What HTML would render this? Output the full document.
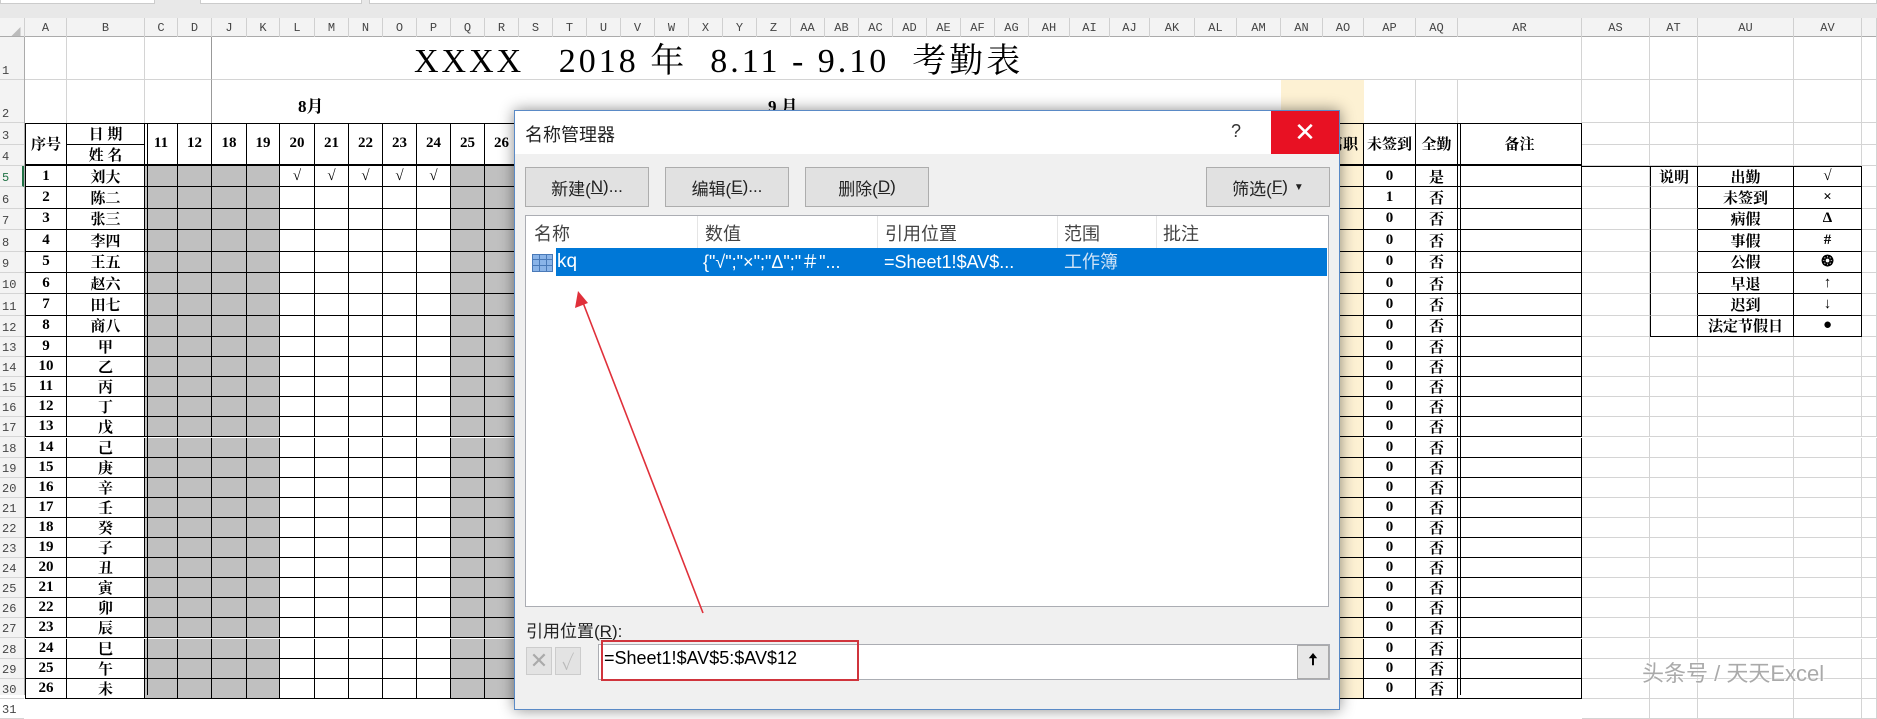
<!DOCTYPE html>
<html><head><meta charset="utf-8">
<style>
*{margin:0;padding:0;box-sizing:border-box}
body{width:1877px;height:695px;overflow:hidden;background:#fff;position:relative;font-family:"Liberation Serif","Noto Serif CJK SC",serif}
.c{position:absolute;display:flex;align-items:center;justify-content:center;white-space:nowrap;overflow:hidden}
.h{color:#444;font-size:12px;font-family:"Liberation Mono","Noto Sans CJK SC",monospace}
.d{font-weight:bold;font-size:15px;color:#000}
.dl{position:absolute;font-family:"Liberation Sans","Noto Sans CJK SC",sans-serif;color:#222;white-space:nowrap}
.btn{position:absolute;top:167px;height:40px;width:124px;background:#e1e1e1;border:1px solid #adadad;display:flex;align-items:center;justify-content:center;font-size:17px;font-family:"Liberation Sans","Noto Sans CJK SC",sans-serif;color:#222}
</style></head><body>
<div id="g"></div>
<script>
var cols=[['',0,25],['A',25,67],['B',67,145],['C',145,178],['D',178,212],['J',212,247],['K',247,280],['L',280,315],['M',315,349],['N',349,383],['O',383,417],['P',417,451],['Q',451,485],['R',485,519]];
var names=['S','T','U','V','W','X','Y','Z','AA','AB','AC','AD','AE','AF','AG'];var x=519;
names.forEach(function(n){cols.push([n,x,x+34]);x+=34;});
[['AH',1070],['AI',1110],['AJ',1150],['AK',1195],['AL',1237],['AM',1281],['AN',1323],['AO',1364],['AP',1416],['AQ',1458],['AR',1582],['AS',1650],['AT',1698],['AU',1794],['AV',1862],['',1877]].forEach(function(a){cols.push([a[0],x,a[1]]);x=a[1];});
var rows=[[18,37],[37,80],[80,123],[123,145],[145,166]];
for(var r=5;r<=12;r++)rows[r]=[166+(r-5)*21.375,166+(r-4)*21.375];
for(r=13;r<=31;r++)rows[r]=[337+(r-13)*20.1,337+(r-12)*20.1];
var h='';
function ci(n){for(var i=0;i<cols.length;i++)if(cols[i][0]==n)return i;}
function box(x1,y1,x2,y2,st,txt,cls){h+='<div class="c '+(cls||'')+'" style="left:'+x1+'px;top:'+y1+'px;width:'+(x2-x1)+'px;height:'+(y2-y1)+'px;'+st+'">'+(txt===undefined?'':txt)+'</div>';}
box(0,0,1877,18,'background:#e8e8e8');
box(0,0,155,4,'background:#fff;border:1px solid #ccc;border-top:0');
box(200,0,362,4,'background:#fff;border:1px solid #ccc;border-top:0');
box(369,0,1877,4,'background:#fff;border:1px solid #ccc;border-top:0');
box(0,18,1877,37,'background:#f3f3f3;border-bottom:1px solid #ababab');
for(var i=1;i<cols.length;i++)box(cols[i][1],18,cols[i][2],37,'border-right:1px solid #d0d0d0',cols[i][0],'h');
box(0,18,25,37,'border-right:1px solid #d0d0d0','<span style="color:#bbb;font-size:9px;margin:8px 0 0 8px">◢</span>');
box(0,37,25,695,'background:#f3f3f3;border-right:1px solid #ababab');
for(r=1;r<=31;r++)box(0,rows[r][0],24,rows[r][1],'justify-content:flex-start;align-items:flex-end;padding:0 0 1px 2px;border-bottom:1px solid #d4d4d4;'+(r==5?'color:#217346;border-right:2px solid #217346':''),r,'h');
var L='1px solid #d4d4d4';
box(25,37,67,80,'border-right:'+L+';border-bottom:'+L);box(67,37,145,80,'border-right:'+L+';border-bottom:'+L);box(145,37,212,80,'border-right:1px solid #999;border-bottom:'+L);
box(25,80,67,123,'border-right:'+L);box(67,80,145,123,'border-right:'+L);box(145,80,212,123,'border-right:1px solid #999');
box(212,37,1582,80,'border-bottom:'+L);
box(1281,80,1364,695,'background:#fdf1d3');
box(1364,80,1416,123,'border-right:'+L);box(1416,80,1458,123,'border-right:'+L);
for(i=ci('AS');i<cols.length;i++){for(r=1;r<=31;r++){if(i<ci('AT')||r<5||r>12||i==cols.length-1)box(cols[i][1],rows[r][0],cols[i][2],rows[r][1],'border-right:'+L+';border-bottom:'+L);}}
box(1458,37,1582,123,'border-right:'+L);box(1364,37,1582,80,'border-bottom:'+L);
var K='1px solid #000';
var days={C:11,D:12,J:18,K:19,L:20,M:21,N:22,O:23,P:24,Q:25,R:26,S:27,T:28,U:29,V:30,W:31,X:1,Y:2,Z:3,AA:4,AB:5,AC:6,AD:7,AE:8,AF:9,AG:10};
var gray={C:1,D:1,J:1,K:1,Q:1,R:1};
var nm=['刘大','陈二','张三','李四','王五','赵六','田七','商八','甲','乙','丙','丁','戊','己','庚','辛','壬','癸','子','丑','寅','卯','辰','巳','午','未'];
box(25,123,1582,124,'background:#000');
for(i=1;i<=ci('AR');i++){var n=cols[i][0],x1=cols[i][1],x2=cols[i][2];
 if(n=='B'){box(x1,123,x2,145,'border-right:'+K+';border-bottom:'+K,'日 期','d');box(x1,145,x2,166,'border-right:'+K+';border-bottom:2px solid #000','姓 名','d');}
 else{var t=n=='A'?'序号':n=='AP'?'未签到':n=='AQ'?'全勤':n=='AR'?'备注':n=='AO'?'离职':(days[n]||'');
 box(x1,123,x2,166,'border-right:'+K+';border-bottom:2px solid #000;'+(i==1?'border-left:'+K:''),t,'d');}
 for(r=5;r<=30;r++){var tx='',bg='';
  if(n=='A')tx=r-4;if(n=='B')tx=nm[r-5];
  if(r==5&&'LMNOP'.indexOf(n)>=0&&n.length==1)tx='√';
  if(n=='AP')tx=String(r==6?1:0);if(n=='AQ')tx=r==5?'是':'否';
  if(gray[n])bg='background:#c0c0c0;';if(n=='AN'||n=='AO')bg='background:#fdf1d3;';
  box(x1,rows[r][0],x2,rows[r][1],bg+'border-right:'+K+';border-bottom:'+K+(i==1?';border-left:'+K:''),tx,'d');}
}
box(147,123,148,695,'background:#000');box(1460,123,1461,695,'background:#000');
var lg=[['出勤','√'],['未签到','×'],['病假','Δ'],['事假','#'],['公假','❂'],['早退','↑'],['迟到','↓'],['法定节假日','●']];
box(1582,166,1862,167,'background:#000');
for(r=5;r<=12;r++){var y1=rows[r][0],y2=rows[r][1];
 box(1650,y1,1698,y2,'border-left:'+K+';border-right:'+K+';border-bottom:'+(r==12?K:'1px solid #ccc'),r==5?'说明':'','d');
 box(1698,y1,1794,y2,'border-right:'+K+';border-bottom:'+K,lg[r-5][0],'d');
 box(1794,y1,1862,y2,'border-right:'+K+';border-bottom:'+K,lg[r-5][1],'d');}
document.getElementById('g').innerHTML=h;
</script>
<div style="position:absolute;left:414px;top:42px;font-size:34px;letter-spacing:3px;white-space:nowrap;line-height:40px">XXXX&nbsp;&nbsp; 2018 年&nbsp; 8.11 - 9.10&nbsp; 考勤表</div>
<div style="position:absolute;left:298px;top:92px;font-size:17px;font-weight:bold">8月</div>
<div style="position:absolute;left:768px;top:92px;font-size:17px;font-weight:bold">9 月</div>
<div style="position:absolute;left:514px;top:110px;width:826px;height:600px;background:#f0f0f0;border:1px solid #5a8ac6;box-shadow:0 0 14px rgba(0,0,0,.45)">
 <div style="position:absolute;left:0;top:0;width:824px;height:43px;background:#fff"></div>
 <div class="dl" style="left:10px;top:10px;font-size:18px">名称管理器</div>
 <div class="dl" style="left:716px;top:10px;font-size:18px;color:#333">?</div>
 <div style="position:absolute;left:756px;top:0;width:68px;height:43px;background:#e81123;color:#fff;font-size:26px;display:flex;align-items:center;justify-content:center;font-family:'Liberation Sans',sans-serif;font-weight:200">✕</div>
</div>
<div class="btn" style="left:525px">新建(<u>N</u>)...</div>
<div class="btn" style="left:665px">编辑(<u>E</u>)...</div>
<div class="btn" style="left:805px">删除(<u>D</u>)</div>
<div class="btn" style="left:1206px">筛选(<u>F</u>) <span style="font-size:10px;margin-left:6px">▼</span></div>
<div style="position:absolute;left:525px;top:215px;width:804px;height:392px;background:#fff;border:1px solid #abadb3"></div>
<div class="dl" style="left:534px;top:220px;font-size:18px;color:#444">名称</div>
<div style="position:absolute;left:697px;top:216px;width:1px;height:32px;background:#e5e5e5"></div>
<div class="dl" style="left:705px;top:220px;font-size:18px;color:#444">数值</div>
<div style="position:absolute;left:877px;top:216px;width:1px;height:32px;background:#e5e5e5"></div>
<div class="dl" style="left:885px;top:220px;font-size:18px;color:#444">引用位置</div>
<div style="position:absolute;left:1057px;top:216px;width:1px;height:32px;background:#e5e5e5"></div>
<div class="dl" style="left:1064px;top:220px;font-size:18px;color:#444">范围</div>
<div style="position:absolute;left:1156px;top:216px;width:1px;height:32px;background:#e5e5e5"></div>
<div class="dl" style="left:1163px;top:220px;font-size:18px;color:#444">批注</div>
<div style="position:absolute;left:532px;top:254px;width:21px;height:18px;background:#8ab4e8;border:1px solid #4a7ab8;background-image:linear-gradient(90deg,transparent 6px,#4a7ab8 6px,#4a7ab8 7px,transparent 7px,transparent 13px,#4a7ab8 13px,#4a7ab8 14px,transparent 14px),linear-gradient(0deg,transparent 5px,#4a7ab8 5px,#4a7ab8 6px,transparent 6px,transparent 11px,#4a7ab8 11px,#4a7ab8 12px,transparent 12px)"></div>
<div style="position:absolute;left:556px;top:248px;width:771px;height:28px;background:#0078d7"></div>
<div class="dl" style="left:557px;top:250px;font-size:19px;line-height:24px;color:#fff">kq</div>
<div class="dl" style="left:703px;top:250px;font-size:18px;line-height:24px;color:#fff">{"√";"×";"Δ";"＃"...</div>
<div class="dl" style="left:884px;top:250px;font-size:18px;line-height:24px;color:#fff">=Sheet1!$AV$...</div>
<div class="dl" style="left:1064px;top:250px;font-size:18px;line-height:24px;color:#cfe3f7">工作簿</div>
<div class="dl" style="left:526px;top:617px;font-size:17px">引用位置(<u>R</u>):</div>
<div style="position:absolute;left:526px;top:647px;width:26px;height:28px;background:#e3e3e3;border:1px solid #ccc;color:#aaa;font-size:22px;display:flex;align-items:center;justify-content:center">✕</div>
<div style="position:absolute;left:555px;top:647px;width:26px;height:28px;background:#e3e3e3;border:1px solid #ccc;color:#bbb;font-size:20px;display:flex;align-items:center;justify-content:center">✓</div>
<div style="position:absolute;left:598px;top:644px;width:732px;height:36px;background:#fff;border:1px solid #abadb3"></div>
<div style="position:absolute;left:1297px;top:645px;width:32px;height:34px;background:#e8e8e8;border:1px solid #aaa;display:flex;align-items:center;justify-content:center;font-size:16px;font-weight:bold">🠅</div>
<div style="position:absolute;left:601px;top:640px;width:258px;height:41px;border:2px solid #d0343c"></div>
<div class="dl" style="left:604px;top:648px;font-size:18px;color:#000">=Sheet1!$AV$5:$AV$12</div>
<svg style="position:absolute;left:0;top:0" width="1877" height="695"><line x1="703" y1="613" x2="582" y2="300" stroke="#e0303a" stroke-width="1.6"/><polygon points="578,291 575,308 588,303" fill="#e0303a"/></svg>
<div style="position:absolute;left:1642px;top:656px;font-size:22px;color:#aaa;font-family:'Liberation Sans','Noto Sans CJK SC',sans-serif;text-shadow:0 0 2px #fff,0 0 2px #fff">头条号 / 天天Excel</div>
</body></html>
